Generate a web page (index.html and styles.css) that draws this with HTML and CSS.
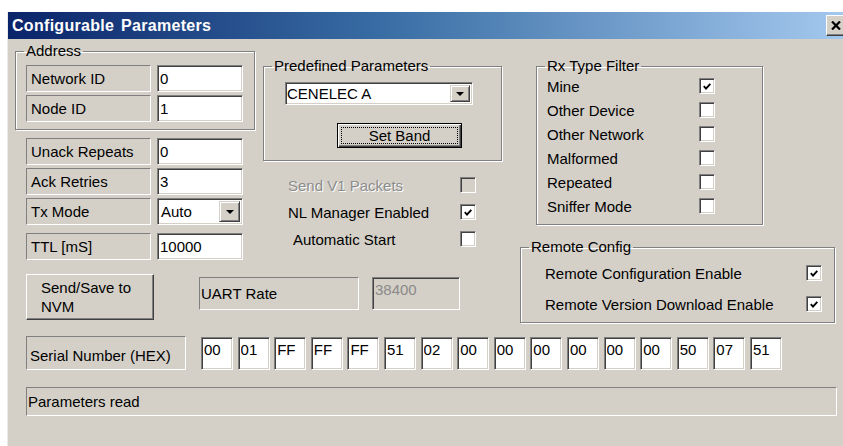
FILE: index.html
```html
<!DOCTYPE html>
<html lang="en">
<head>
<meta charset="utf-8">
<title>Configurable Parameters</title>
<link rel="stylesheet" href="styles.css">
</head>
<body>
<div class="window">
  <div class="titlebar">
    <span class="title">Configurable Parameters</span>
    <button class="close" type="button" aria-label="Close">
      <svg width="10" height="9" viewBox="0 0 10 9"><path d="M1 0.5 L9 8.5 M9 0.5 L1 8.5" stroke="#000" stroke-width="2.2"/></svg>
    </button>
  </div>

  <div class="client">
    <div class="main">
      <div class="left-part">
        <div class="upper">
          <div class="col-a">
            <fieldset class="group address">
              <legend>Address</legend>
              <div class="field-list">
                <div class="field"><span class="static">Network ID</span><input class="edit" type="text" value="0"></div>
                <div class="field"><span class="static">Node ID</span><input class="edit" type="text" value="1"></div>
              </div>
            </fieldset>
            <div class="field-list link-fields">
              <div class="field"><span class="static">Unack Repeats</span><input class="edit" type="text" value="0"></div>
              <div class="field"><span class="static">Ack Retries</span><input class="edit" type="text" value="3"></div>
              <div class="field"><span class="static">Tx Mode</span>
                <div class="combo tx-combo"><span class="combo-text">Auto</span><span class="drop-btn"><span class="arrow"></span></span></div>
              </div>
              <div class="field ttl"><span class="static">TTL [mS]</span><input class="edit" type="text" value="10000"></div>
            </div>
          </div>

          <div class="col-b">
            <fieldset class="group predef">
              <legend>Predefined Parameters</legend>
              <div class="combo band-combo"><span class="combo-text">CENELEC A</span><span class="drop-btn"><span class="arrow"></span></span></div>
              <button class="btn default set-band" type="button"><span class="focus">Set Band</span></button>
            </fieldset>
            <div class="check-list nl-checks">
              <div class="check-row disabled"><span class="check-label">Send V1 Packets</span><span class="check"></span></div>
              <div class="check-row"><span class="check-label">NL Manager Enabled</span><span class="check on"><svg width="8" height="7" viewBox="0 0 8 7"><path d="M0.8 3.2 L3 5.6 L7.3 0.8" fill="none" stroke="#000" stroke-width="1.9"/></svg></span></div>
              <div class="check-row indent"><span class="check-label">Automatic Start</span><span class="check"></span></div>
            </div>
          </div>
        </div>

        <div class="actions">
          <button class="btn nvm" type="button">Send/Save to<br>NVM</button>
          <span class="static uart">UART Rate</span>
          <input class="edit disabled uart-value" type="text" value="38400" disabled>
        </div>
      </div>

      <div class="right-part">
        <fieldset class="group rx">
          <legend>Rx Type Filter</legend>
          <div class="rx-list">
            <div class="rx-row"><span class="check-label">Mine</span><span class="check on"><svg width="8" height="7" viewBox="0 0 8 7"><path d="M0.8 3.2 L3 5.6 L7.3 0.8" fill="none" stroke="#000" stroke-width="1.9"/></svg></span></div>
            <div class="rx-row"><span class="check-label">Other Device</span><span class="check"></span></div>
            <div class="rx-row"><span class="check-label">Other Network</span><span class="check"></span></div>
            <div class="rx-row"><span class="check-label">Malformed</span><span class="check"></span></div>
            <div class="rx-row"><span class="check-label">Repeated</span><span class="check"></span></div>
            <div class="rx-row"><span class="check-label">Sniffer Mode</span><span class="check"></span></div>
          </div>
        </fieldset>
        <fieldset class="group remote">
          <legend>Remote Config</legend>
          <div class="remote-list">
            <div class="remote-row"><span class="check-label">Remote Configuration Enable</span><span class="check on"><svg width="8" height="7" viewBox="0 0 8 7"><path d="M0.8 3.2 L3 5.6 L7.3 0.8" fill="none" stroke="#000" stroke-width="1.9"/></svg></span></div>
            <div class="remote-row"><span class="check-label">Remote Version Download Enable</span><span class="check on"><svg width="8" height="7" viewBox="0 0 8 7"><path d="M0.8 3.2 L3 5.6 L7.3 0.8" fill="none" stroke="#000" stroke-width="1.9"/></svg></span></div>
          </div>
        </fieldset>
      </div>
    </div>

    <div class="serial">
      <span class="static serial-label">Serial Number (HEX)</span>
      <div class="hex-list">
        <input class="edit hex" type="text" value="00">
        <input class="edit hex" type="text" value="01">
        <input class="edit hex" type="text" value="FF">
        <input class="edit hex" type="text" value="FF">
        <input class="edit hex" type="text" value="FF">
        <input class="edit hex" type="text" value="51">
        <input class="edit hex" type="text" value="02">
        <input class="edit hex" type="text" value="00">
        <input class="edit hex" type="text" value="00">
        <input class="edit hex" type="text" value="00">
        <input class="edit hex" type="text" value="00">
        <input class="edit hex" type="text" value="00">
        <input class="edit hex" type="text" value="00">
        <input class="edit hex" type="text" value="50">
        <input class="edit hex" type="text" value="07">
        <input class="edit hex" type="text" value="51">
      </div>
    </div>

    <div class="static status">Parameters read</div>
  </div>
</div>
</body>
</html>
```

FILE: styles.css
```css
/* Classic dialog: 3D face colour and bevels */
html, body {
  margin: 0;
  padding: 0;
}

body {
  width: 843px;
  height: 446px;
  overflow: hidden;
  background: #ffffff;
  font-family: "Liberation Sans", Arial, sans-serif;
  font-size: 15px;
  color: #000;
}

.window {
  margin: 12px 0 0 7px;
  width: 845px;
  height: 440px;
  background: #d4d0c8;
  border-left: 1px solid #eceae6;
}

/* ---- caption ---- */
.titlebar {
  height: 27px;
  display: flex;
  align-items: center;
  justify-content: space-between;
  padding-left: 4px;
  background: linear-gradient(90deg, #0a246a 0%, #3a6ea5 45%, #a6caf0 100%);
}

.title {
  color: #fff;
  font-weight: bold;
  font-size: 16px;
  letter-spacing: 0.3px;
  word-spacing: 2px;
}

.close {
  margin-right: 7px;
  width: 20px;
  height: 21px;
  padding: 0;
  display: flex;
  align-items: center;
  justify-content: center;
  background: #d4d0c8;
  border: 1px solid;
  border-color: #fff #404040 #404040 #fff;
  box-shadow: inset -1px -1px 0 #808080;
}

/* ---- client area ---- */
.client {
  padding-left: 7px;
}

.main {
  display: flex;
  align-items: flex-start;
}

.left-part {
  width: 487px;
  display: flex;
  flex-direction: column;
}

.upper {
  display: flex;
  align-items: flex-start;
  gap: 8px;
}

.col-a {
  width: 240px;
}

.col-b {
  width: 239px;
  margin-top: 19px;
}

.right-part {
  width: 315px;
  margin-left: 18px;
}

/* etched group frame */
.group {
  margin: 0;
  padding: 0 0 0 8px;
  min-width: 0;
  box-sizing: border-box;
  border: 1px solid #808080;
  box-shadow: inset 1px 1px 0 #fff, 1px 1px 0 #fff;
}

.group legend {
  padding: 0 2px;
  line-height: 16px;
}

.address {
  width: 240px;
  margin-top: 4px;
}

.predef {
  width: 239px;
  padding-bottom: 12px;
}

.rx {
  width: 227px;
  margin: 19px 0 0 16px;
}

.remote {
  width: 315px;
  margin-top: 14px;
}

/* sunken static text */
.static {
  display: flex;
  align-items: center;
  box-sizing: border-box;
  padding-left: 4px;
  border: 1px solid;
  border-color: #808080 #fff #fff #808080;
  white-space: nowrap;
}

/* sunken edit field */
.edit,
.combo {
  box-sizing: border-box;
  border: 1px solid;
  border-color: #808080 #fff #fff #808080;
  box-shadow: inset 1px 1px 0 #404040, inset -1px -1px 0 #d4d0c8;
  background: #fff;
  font: inherit;
  color: #000;
  margin: 0;
  padding: 0 0 0 2px;
  outline: none;
}

.edit.disabled {
  background: #d4d0c8;
  color: #8a8a8a;
}

/* label + edit rows */
.field-list {
  display: flex;
  flex-direction: column;
  gap: 3px;
}

.address .field-list {
  padding: 6px 0 7px 2px;
}

.link-fields {
  margin: 8px 0 0 11px;
}

.field {
  display: flex;
  gap: 6px;
  height: 27px;
}

.field .static {
  width: 125px;
}

.field .edit,
.field .combo {
  width: 86px;
  height: 27px;
}

.field.ttl {
  margin-top: 5px;
}

/* drop-down list */
.combo {
  display: flex;
  align-items: center;
  padding: 2px 2px 2px 3px;
}

.combo-text {
  flex: 1;
}

.drop-btn {
  box-sizing: border-box;
  align-self: stretch;
  width: 21px;
  display: flex;
  align-items: center;
  justify-content: center;
  background: #d4d0c8;
  border: 1px solid;
  border-color: #d4d0c8 #404040 #404040 #d4d0c8;
  box-shadow: inset 1px 1px 0 #fff, inset -1px -1px 0 #808080;
}

.arrow {
  width: 0;
  height: 0;
  border-left: 4px solid transparent;
  border-right: 4px solid transparent;
  border-top: 4px solid #000;
}

.band-combo {
  width: 188px;
  height: 23px;
  margin: 8px 0 0 13px;
  padding-left: 1px;
}

.band-combo .drop-btn {
  width: 20px;
}

/* push buttons */
.btn {
  box-sizing: border-box;
  font: inherit;
  color: #000;
  background: #d4d0c8;
  border: 1px solid;
  border-color: #fff #404040 #404040 #fff;
  box-shadow: inset -1px -1px 0 #808080;
  padding: 0;
  margin: 0;
}

.btn.default {
  border: 1px solid #000;
  box-shadow: inset 1px 1px 0 #fff, inset -1px -1px 0 #404040, inset -2px -2px 0 #808080;
  display: flex;
  padding: 3px;
}

.btn.default .focus {
  flex: 1;
  display: flex;
  align-items: center;
  justify-content: center;
  border: 1px dotted #000;
}

.set-band {
  width: 125px;
  height: 25px;
  margin: 18px 0 0 65px;
}

.nvm {
  width: 128px;
  height: 46px;
  text-align: left;
  padding-left: 14px;
  line-height: 19px;
}

/* check boxes */
.check {
  box-sizing: border-box;
  width: 16px;
  height: 16px;
  flex: none;
  display: flex;
  align-items: center;
  justify-content: center;
  border: 1px solid;
  border-color: #808080 #fff #fff #808080;
  box-shadow: inset 1px 1px 0 #404040, inset -1px -1px 0 #d4d0c8;
  background: #fff;
}

.check-label {
  white-space: nowrap;
}

.nl-checks {
  margin-top: 16px;
  display: flex;
  flex-direction: column;
  gap: 11px;
}

.check-row {
  display: flex;
  align-items: center;
  height: 16px;
  padding-left: 25px;
}

.check-row .check-label {
  width: 172px;
}

.check-row.indent .check-label {
  box-sizing: border-box;
  padding-left: 5px;
}

.check-row.disabled .check-label {
  color: #8c8c8c;
  text-shadow: 1px 1px 0 #fff;
}

.check-row.disabled .check {
  background: #d4d0c8;
}

.rx-list {
  padding: 0 0 6px 2px;
}

.rx-row {
  display: flex;
  align-items: center;
  height: 24px;
}

.rx-row .check-label {
  width: 152px;
}

.remote-list {
  padding: 6px 0 6px 16px;
  display: flex;
  flex-direction: column;
  gap: 7px;
}

.remote-row {
  display: flex;
  align-items: center;
  height: 24px;
}

.remote-row .check-label {
  width: 261px;
}

/* bottom rows */
.actions {
  display: flex;
  align-items: flex-start;
  margin: 14px 0 0 11px;
}

.uart {
  width: 160px;
  height: 33px;
  margin: 3px 0 0 45px;
  padding-left: 1px;
}

.uart-value {
  width: 88px;
  height: 33px;
  margin: 3px 0 0 13px;
  padding-bottom: 8px;
}

.serial {
  display: flex;
  align-items: flex-start;
  margin: 13px 0 0 11px;
}

.serial-label {
  width: 160px;
  height: 34px;
  padding: 4px 0 0 3px;
}

.hex-list {
  display: flex;
  gap: 4.6px;
  margin: 1px 0 0 15px;
}

.hex {
  width: 32px;
  height: 33px;
  padding: 0 0 8px 2px;
}

.status {
  width: 811px;
  height: 29px;
  margin: 17px 0 0 11px;
  padding-left: 1px;
}
```
